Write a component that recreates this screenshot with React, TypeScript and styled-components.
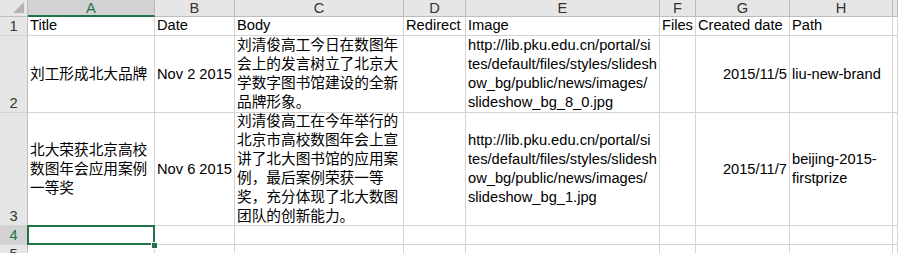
import { createGlobalStyle, styled } from "styled-components";

const GREEN = "#217346";
const GRID = "#d4d4d4";
const HEAD_LINE = "#bdbdbd";

const GlobalStyle = createGlobalStyle`
  html, body {
    margin: 0;
    padding: 0;
    background: #ffffff;
    overflow: hidden;
  }
  body {
    font-family: "Liberation Sans", "Noto Sans CJK SC", sans-serif;
  }
`;

const columns = ["A", "B", "C", "D", "E", "F", "G", "H", ""];
const colWidths = [127, 80, 169, 62, 194, 36, 94, 103];
const rowHeights = [19, 77, 113, 19, 19];

type Align = "left" | "right" | "center";
type VAlign = "top" | "center" | "bottom";

type CellData = { text?: string; align?: Align; valign?: VAlign };

const url1 =
  "http://lib.pku.edu.cn/portal/si\ntes/default/files/styles/slidesh\now_bg/public/news/images/\nslideshow_bg_8_0.jpg";
const url2 =
  "http://lib.pku.edu.cn/portal/si\ntes/default/files/styles/slidesh\now_bg/public/news/images/\nslideshow_bg_1.jpg";

const rows: CellData[][] = [
  [
    { text: "Title", valign: "bottom" },
    { text: "Date", valign: "bottom" },
    { text: "Body", valign: "bottom" },
    { text: "Redirect", valign: "bottom" },
    { text: "Image", valign: "bottom" },
    { text: "Files", valign: "bottom" },
    { text: "Created date", valign: "bottom" },
    { text: "Path", valign: "bottom" },
    {},
  ],
  [
    { text: "刘工形成北大品牌" },
    { text: "Nov 2 2015" },
    {
      text: "刘清俊高工今日在数图年\n会上的发言树立了北京大\n学数字图书馆建设的全新\n品牌形象。",
    },
    {},
    { text: url1 },
    {},
    { text: "2015/11/5", align: "right" },
    { text: "liu-new-brand" },
    {},
  ],
  [
    { text: "北大荣获北京高校\n数图年会应用案例\n一等奖" },
    { text: "Nov 6 2015" },
    {
      text: "刘清俊高工在今年举行的\n北京市高校数图年会上宣\n讲了北大图书馆的应用案\n例，最后案例荣获一等\n奖，充分体现了北大数图\n团队的创新能力。",
    },
    {},
    { text: url2 },
    {},
    { text: "2015/11/7", align: "right" },
    { text: "beijing-2015-\nfirstprize" },
    {},
  ],
  [{}, {}, {}, {}, {}, {}, {}, {}, {}],
  [{}, {}, {}, {}, {}, {}, {}, {}, {}],
];

export default function App() {
  return (
    <>
      <GlobalStyle />
      <Sheet>
        <Corner>
          <CornerTriangle />
        </Corner>
        {columns.map((c, i) => (
          <ColHeader key={c + i} selected={i === 0}>
            {c}
          </ColHeader>
        ))}
        {rows.map((row, r) => (
          <Row key={r} row={row} index={r} />
        ))}
      </Sheet>
    </>
  );
}

const Row = ({ row, index }: { row: CellData[]; index: number }) => (
  <>
    <RowHeader selected={index === 3}>{index + 1}</RowHeader>
    {row.map((cell, c) => (
      <Cell
        key={c}
        align={cell.align ?? "left"}
        valign={cell.valign ?? "center"}
        active={index === 3 && c === 0}
      >
        {cell.text && <CellText>{cell.text}</CellText>}
      </Cell>
    ))}
  </>
);

const Sheet = styled.div`
  display: grid;
  grid-template-columns: 28px ${colWidths.map((w) => `${w}px`).join(" ")} 1fr;
  grid-template-rows: 17px ${rowHeights.map((h) => `${h}px`).join(" ")};
  width: 898px;
  height: 253px;
  overflow: hidden;
  font-size: 14.67px;
  color: #000;
`;

const Corner = styled.div`
  position: relative;
  background: #e6e6e6;
  border-right: 1px solid ${HEAD_LINE};
  border-bottom: 1px solid ${HEAD_LINE};
  box-sizing: border-box;
`;

const CornerTriangle = styled.div`
  position: absolute;
  right: 3px;
  bottom: 3px;
  width: 0;
  height: 0;
  border-left: 11px solid transparent;
  border-bottom: 11px solid #b5b5b5;
`;

const ColHeader = styled.div<{ selected?: boolean }>`
  box-sizing: border-box;
  display: flex;
  align-items: center;
  justify-content: center;
  background: ${(p) => (p.selected ? "#d2d2d2" : "#e6e6e6")};
  color: ${(p) => (p.selected ? GREEN : "#333")};
  border-right: 1px solid ${HEAD_LINE};
  border-bottom: ${(p) => (p.selected ? `2px solid ${GREEN}` : `1px solid ${HEAD_LINE}`)};
  ${(p) => (p.selected ? `padding-top: 1px;` : ``)}
  font-size: 14.67px;
  line-height: 16px;
`;

const RowHeader = styled.div<{ selected?: boolean }>`
  box-sizing: border-box;
  display: flex;
  align-items: flex-end;
  justify-content: center;
  background: ${(p) => (p.selected ? "#d2d2d2" : "#e6e6e6")};
  color: ${(p) => (p.selected ? GREEN : "#333")};
  border-right: 1px solid ${HEAD_LINE};
  border-bottom: 1px solid ${GRID};
  font-size: 14.67px;
  line-height: 18px;
`;

const Cell = styled.div<{ align: Align; valign: VAlign; active?: boolean }>`
  position: relative;
  box-sizing: border-box;
  display: flex;
  align-items: ${(p) =>
    p.valign === "top" ? "flex-start" : p.valign === "bottom" ? "flex-end" : "center"};
  justify-content: ${(p) =>
    p.align === "right" ? "flex-end" : p.align === "center" ? "center" : "flex-start"};
  padding: 0 2px 0 2px;
  border-right: 1px solid ${GRID};
  border-bottom: 1px solid ${GRID};
  line-height: 19px;
  min-width: 0;
  ${(p) =>
    p.active
      ? `
  &::before {
    content: "";
    position: absolute;
    left: -1px;
    top: -1px;
    right: -1px;
    bottom: -1px;
    border: 2px solid ${GREEN};
    z-index: 2;
  }
  &::after {
    content: "";
    position: absolute;
    right: -4px;
    bottom: -5px;
    width: 5px;
    height: 5px;
    background: ${GREEN};
    border: 1px solid #fff;
    z-index: 3;
  }`
      : ``}
`;

const CellText = styled.span`
  white-space: pre;
`;
